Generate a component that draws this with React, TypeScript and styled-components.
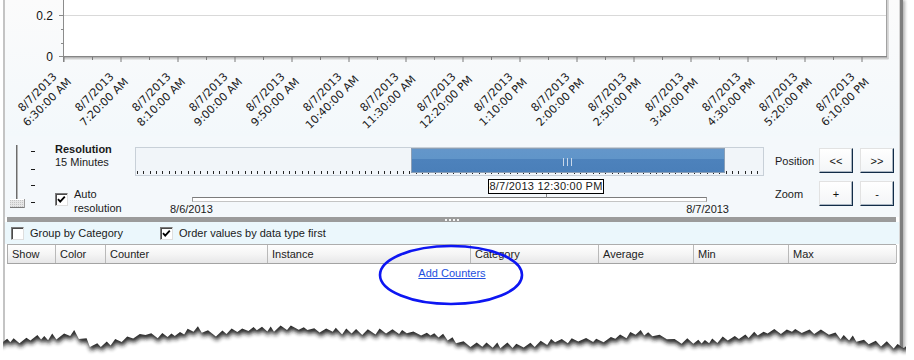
import React from "react";
import styled, { createGlobalStyle } from "styled-components";

const GlobalStyle = createGlobalStyle`
  html, body { margin: 0; padding: 0; background: #ffffff; }
  body {
    width: 914px; height: 360px; overflow: hidden;
    font-family: "Liberation Sans", Arial, sans-serif;
    font-size: 11px; color: #1a1a1a;
  }
  #root { width: 914px; height: 360px; }
`;

const Page = styled.div`
  position: relative;
  width: 914px;
  height: 360px;
  overflow: hidden;
  background: #ffffff;
`;

const Frame = styled.div`
  box-sizing: border-box;
  margin-left: 3px;
  width: 897px;
  height: 360px;
  border-left: 2px solid #c4c4c4;
  border-right: 1px solid #d6d6d6;
  box-shadow: 3px 0 0 #7e7e7e, 5px 0 3px rgba(0, 0, 0, 0.3);
  display: flex;
  flex-direction: column;
  background: #ffffff;
`;

const ChartArea = styled.div`
  height: 136px;
  background: linear-gradient(to bottom, #fbfbfb 0%, #f3f8fb 100%);
`;

const ChartSvg = styled.svg`
  display: block;
  font-family: "DejaVu Sans", Verdana, sans-serif;
  font-size: 11px;
`;

const Controls = styled.div`
  height: 81px;
  display: flex;
  background: #f4f8fb;
`;

const SliderCol = styled.div`
  width: 50px;
  flex: none;
`;

const ResolutionCol = styled.div`
  width: 80px;
  flex: none;
  padding-top: 7px;
  box-sizing: border-box;
  display: flex;
  flex-direction: column;
  line-height: 13px;
`;

const Title = styled.div`
  font-weight: bold;
`;

const AutoRow = styled.div`
  margin-top: 18px;
  display: flex;
  gap: 6px;
  line-height: 14px;
`;

const Box = styled.span<{ $top?: number }>`
  box-sizing: border-box;
  flex: none;
  width: 13px;
  height: 13px;
  margin-top: ${(p) => p.$top ?? 0}px;
  background: #ffffff;
  border-style: solid;
  border-width: 1px;
  border-color: #7b7b7b #dedede #dedede #7b7b7b;
  box-shadow: inset 1px 1px 0 #4a4a4a;
  display: flex;
  align-items: center;
  justify-content: center;
`;

const RangeCol = styled.div`
  position: relative;
  width: 629px;
  flex: none;
  padding-top: 11px;
  box-sizing: border-box;
`;

const Track = styled.div`
  position: relative;
  box-sizing: border-box;
  height: 29px;
  border: 1px solid #c8d0d8;
  background-color: #f1f5f9;
  background-image: repeating-linear-gradient(
    to right,
    #262626 0 1px,
    transparent 1px 6.33px
  );
  background-size: 100% 3px;
  background-repeat: no-repeat;
  background-position: 1px calc(100% - 1px);
`;

const Selection = styled.div<{ $left: number; $width: number }>`
  position: absolute;
  top: 0;
  left: ${(p) => p.$left}px;
  width: ${(p) => p.$width}px;
  height: 25px;
  box-sizing: border-box;
  border: 1px solid #8b9fb6;
  background: linear-gradient(
    to bottom,
    #6496ca 0%,
    #6095c9 44%,
    #4d82bc 44%,
    #4a7fb9 100%
  );
  display: flex;
  align-items: center;
  justify-content: center;
`;

const Grip = styled.div`
  width: 11px;
  height: 8px;
  margin-top: 2px;
  background: repeating-linear-gradient(
    to right,
    #c9d8ea 0 1px,
    transparent 1px 4px
  );
`;

const Tip = styled.div`
  position: absolute;
  left: 353px;
  top: 43px;
  box-sizing: border-box;
  width: 116px;
  height: 15px;
  border: 1px solid #000000;
  background: #ffffff;
  line-height: 13px;
  text-align: center;
  letter-spacing: 0.25px;
  &::after {
    content: "";
    position: absolute;
    left: 57px;
    top: 14px;
    width: 1px;
    height: 4px;
    background: #8a8a8a;
  }
`;

const SmallTrack = styled.div`
  box-sizing: border-box;
  margin: 21px 57px 0;
  height: 5px;
  background: #ffffff;
  border-style: solid;
  border-width: 1px;
  border-color: #7c7c7c #9c9c9c #c4c4c4 #9c9c9c;
`;

const Dates = styled.div`
  margin-top: 1px;
  padding: 0 35px;
  display: flex;
  justify-content: space-between;
  line-height: 13px;
`;

const NavGrid = styled.div`
  margin-left: 11px;
  padding-top: 12px;
  display: grid;
  grid-template-columns: 37px 34px 34px;
  grid-auto-rows: 25px;
  column-gap: 7px;
  row-gap: 8px;
  align-items: center;
`;

const NavLabel = styled.span`
  line-height: 13px;
  padding-top: 2px;
  white-space: nowrap;
`;

const NavButton = styled.button`
  box-sizing: border-box;
  width: 34px;
  height: 25px;
  margin: 0;
  padding: 0;
  font-family: "Liberation Sans", Arial, sans-serif;
  font-size: 11px;
  color: #111111;
  background: linear-gradient(to bottom, #ffffff, #f3f5f7);
  border-style: solid;
  border-width: 1px;
  border-color: #e2e2e2 #122c48 #122c48 #e2e2e2;
  box-shadow: inset -1px -1px 0 #aab6c2;
`;

const Splitter = styled.div`
  height: 5px;
  margin: 0 3px 0 2px;
  background: #9b9b9b;
  display: flex;
  align-items: center;
  justify-content: center;
  gap: 2px;
`;

const Dot = styled.span`
  width: 2px;
  height: 2px;
  background: #f4f4f4;
`;

const CheckRow = styled.div`
  height: 22px;
  background: #ebf7fc;
  display: flex;
  align-items: center;
  padding-left: 6px;
`;

const CheckItem = styled.label<{ $width?: number }>`
  display: flex;
  align-items: center;
  gap: 6px;
  width: ${(p) => (p.$width ? `${p.$width}px` : "auto")};
  line-height: 13px;
  padding-top: 1px;
`;

const Table = styled.div`
  flex: 1;
  display: flex;
  flex-direction: column;
  background: #ffffff;
`;

const Header = styled.div`
  box-sizing: border-box;
  margin: 0 3px 0 2px;
  height: 20px;
  display: grid;
  grid-template-columns: 48px 50px 162px 203px 128px 95px 95px 108px;
  border-top: 1px solid #adadad;
  border-left: 1px solid #adadad;
  border-bottom: 1px solid #a3a3a3;
  background: linear-gradient(to bottom, #fefefe 0%, #f5f5f5 50%, #e7e7e8 100%);
`;

const HeadCell = styled.div`
  box-sizing: border-box;
  padding-left: 4px;
  line-height: 18px;
  color: #222222;
  border-right: 1px solid #b9b9b9;
  white-space: nowrap;
`;

const Body = styled.div`
  flex: 1;
  padding-top: 3px;
  text-align: center;
  line-height: 13px;
`;

const Link = styled.a`
  color: #2350e0;
  text-decoration: underline;
  cursor: pointer;
`;

const Annotation = styled.svg`
  position: absolute;
  left: 378px;
  top: 243px;
`;

const Torn = styled.svg`
  position: absolute;
  left: 0;
  top: 316px;
`;

const TIMES = [
  "6:30:00 AM",
  "7:20:00 AM",
  "8:10:00 AM",
  "9:00:00 AM",
  "9:50:00 AM",
  "10:40:00 AM",
  "11:30:00 AM",
  "12:20:00 PM",
  "1:10:00 PM",
  "2:00:00 PM",
  "2:50:00 PM",
  "3:40:00 PM",
  "4:30:00 PM",
  "5:20:00 PM",
  "6:10:00 PM",
];

const X0 = 64;
const X1 = 886;

function Chart() {
  const ticks: number[] = [];
  for (let i = 0; X0 + 28.5 * i <= X1 - 10; i++) ticks.push(X0 + 28.5 * i);
  return (
    <ChartSvg width={894} height={136} viewBox="5 0 894 136">
      <rect x={X0} y={-2} width={X1 - X0} height={58.5} fill="#ffffff" />
      <line x1={887.8} y1={0} x2={887.8} y2={59} stroke="#d2d2d2" strokeWidth={2} />
      <line x1={64} y1={58.6} x2={888.5} y2={58.6} stroke="#cfcfcf" strokeWidth={2} />
      <line x1={886.5} y1={-2} x2={886.5} y2={57} stroke="#a2a2a2" />
      <line x1={X0} y1={15.5} x2={X1} y2={15.5} stroke="#d9d9d9" />
      <line x1={63.5} y1={-2} x2={63.5} y2={62} stroke="#8c8c8c" />
      <line x1={63} y1={56.8} x2={887} y2={56.8} stroke="#858585" strokeWidth={1.6} />
      {[15.5, 56.5].map((y) => (
        <line key={y} x1={59} y1={y} x2={64} y2={y} stroke="#8a8a8a" />
      ))}
      {[29.5, 43.5].map((y) => (
        <line key={y} x1={61} y1={y} x2={64} y2={y} stroke="#8a8a8a" />
      ))}
      <text x={53} y={19.5} textAnchor="end" fill="#111" fontFamily="Liberation Sans, Arial, sans-serif" fontSize={12}>
        0.2
      </text>
      <text x={53} y={60.5} textAnchor="end" fill="#111" fontFamily="Liberation Sans, Arial, sans-serif" fontSize={12}>
        0
      </text>
      {ticks.map((x, i) => (
        <line key={x} x1={x} y1={57} x2={x} y2={i % 2 === 0 ? 62 : 60} stroke="#7a7a7a" />
      ))}
      {TIMES.map((t, i) => {
        const ax = X0 + 57 * i - 22;
        const ay = 97;
        return (
          <text key={t} transform={`translate(${ax} ${ay}) rotate(-45)`} textAnchor="middle" fill="#1a1a1a">
            <tspan x={0} y={-3}>
              8/7/2013
            </tspan>
            <tspan x={0} y={11}>
              {t}
            </tspan>
          </text>
        );
      })}
    </ChartSvg>
  );
}

function VSlider() {
  return (
    <svg width={50} height={81} viewBox="5 136 50 81" style={{ display: "block" }}>
      <defs>
        <pattern id="thumbDots" width="2" height="2" patternUnits="userSpaceOnUse">
          <rect width="2" height="2" fill="#e6e6e6" />
          <rect width="1" height="1" fill="#c4c4c4" />
        </pattern>
      </defs>
      <rect x={16} y={145} width={1} height={63} fill="#6c6c6c" />
      <rect x={17} y={145} width={1} height={63} fill="#b4b4b4" />
      <rect x={10} y={199} width={15} height={9} fill="url(#thumbDots)" />
      <line x1={10} y1={199.5} x2={25} y2={199.5} stroke="#ffffff" />
      <line x1={10} y1={207.5} x2={25} y2={207.5} stroke="#7a7a7a" />
      <line x1={24.5} y1={199} x2={24.5} y2={208} stroke="#9a9a9a" />
      {[151.5, 169.5, 185.5, 202.5].map((y) => (
        <line key={y} x1={31} y1={y} x2={35} y2={y} stroke="#1a1a1a" />
      ))}
    </svg>
  );
}

function Check({ checked, top }: { checked?: boolean; top?: number }) {
  return (
    <Box $top={top}>
      {checked && (
        <svg width={9} height={9} viewBox="0 0 9 9">
          <path d="M1 4.2 L3.2 6.6 L7.8 1.6" stroke="#000" strokeWidth={1.8} fill="none" />
        </svg>
      )}
    </Box>
  );
}

// torn paper edge
const BASE: [number, number][] = [
  [0, 343], [20, 340], [60, 336], [75, 333], [93, 346], [120, 340], [145, 334],
  [170, 336], [197, 329], [212, 335], [240, 330], [300, 328], [350, 332],
  [400, 331], [440, 335], [470, 344], [520, 346], [560, 340], [600, 341],
  [643, 332], [680, 342], [720, 340], [760, 333], [800, 330], [830, 334],
  [860, 340], [890, 345], [914, 348],
];

function baseY(x: number) {
  for (let i = 0; i < BASE.length - 1; i++) {
    const [ax, ay] = BASE[i];
    const [bx, by] = BASE[i + 1];
    if (x >= ax && x <= bx) return ay + ((by - ay) * (x - ax)) / (bx - ax);
  }
  return BASE[BASE.length - 1][1];
}

function buildEdge() {
  let seed = 12345;
  const rand = () => {
    seed = (seed * 16807) % 2147483647;
    return (seed - 1) / 2147483646;
  };
  const pts: [number, number][] = [];
  let x = 0;
  let i = 0;
  while (x < 914) {
    const amp = 0.8 + rand() * 2.6;
    pts.push([x, baseY(x) + (i % 2 === 0 ? amp : -amp)]);
    x += 3 + rand() * 5;
    i++;
  }
  pts.push([914, baseY(914)]);
  const line = pts.map(([px, py]) => `${px.toFixed(1)} ${py.toFixed(1)}`);
  const below = `M0 360 L914 360 L${line.slice().reverse().join(" L")} Z`;
  const paper = `M0 300 L914 300 L${line.slice().reverse().join(" L")} Z`;
  return { below, paper };
}

const EDGE = buildEdge();

function TornEdge() {
  return (
    <Torn width={914} height={44} viewBox="0 316 914 44">
      <defs>
        <filter id="edgeBlur" x="-5%" y="-50%" width="110%" height="200%">
          <feGaussianBlur stdDeviation="2.2" />
        </filter>
        <clipPath id="belowClip">
          <path d={EDGE.below} />
        </clipPath>
        <clipPath id="paperX">
          <rect x={3} y={300} width={903} height={60} />
        </clipPath>
      </defs>
      <path d={EDGE.below} fill="#ffffff" />
      <g clipPath="url(#belowClip)">
        <g clipPath="url(#paperX)">
          <path d={EDGE.paper} fill="#1a1a1a" opacity={0.95} filter="url(#edgeBlur)" transform="translate(1 4)" />
        </g>
      </g>
    </Torn>
  );
}

const COLUMNS = ["Show", "Color", "Counter", "Instance", "Category", "Average", "Min", "Max"];

export default function App() {
  return (
    <Page>
      <GlobalStyle />
      <Frame>
        <ChartArea>
          <Chart />
        </ChartArea>
        <Controls>
          <SliderCol>
            <VSlider />
          </SliderCol>
          <ResolutionCol>
            <Title>Resolution</Title>
            <div>15 Minutes</div>
            <AutoRow>
              <Check checked top={6} />
              <div>
                Auto
                <br />
                resolution
              </div>
            </AutoRow>
          </ResolutionCol>
          <RangeCol>
            <Track>
              <Selection $left={275} $width={314}>
                <Grip />
              </Selection>
            </Track>
            <Tip>8/7/2013 12:30:00 PM</Tip>
            <SmallTrack />
            <Dates>
              <span>8/6/2013</span>
              <span>8/7/2013</span>
            </Dates>
          </RangeCol>
          <NavGrid>
            <NavLabel>Position</NavLabel>
            <NavButton>&lt;&lt;</NavButton>
            <NavButton>&gt;&gt;</NavButton>
            <NavLabel>Zoom</NavLabel>
            <NavButton>+</NavButton>
            <NavButton>-</NavButton>
          </NavGrid>
        </Controls>
        <Splitter>
          <Dot />
          <Dot />
          <Dot />
          <Dot />
        </Splitter>
        <CheckRow>
          <CheckItem $width={149}>
            <Check />
            <span>Group by Category</span>
          </CheckItem>
          <CheckItem>
            <Check checked />
            <span>Order values by data type first</span>
          </CheckItem>
        </CheckRow>
        <Table>
          <Header>
            {COLUMNS.map((c) => (
              <HeadCell key={c}>{c}</HeadCell>
            ))}
          </Header>
          <Body>
            <Link>Add Counters</Link>
          </Body>
        </Table>
      </Frame>
      <Annotation width={148} height={64} viewBox="0 0 148 64">
        <ellipse cx={73} cy={32} rx={71} ry={29} fill="none" stroke="#0d16f2" strokeWidth={2.6} />
      </Annotation>
      <TornEdge />
    </Page>
  );
}
